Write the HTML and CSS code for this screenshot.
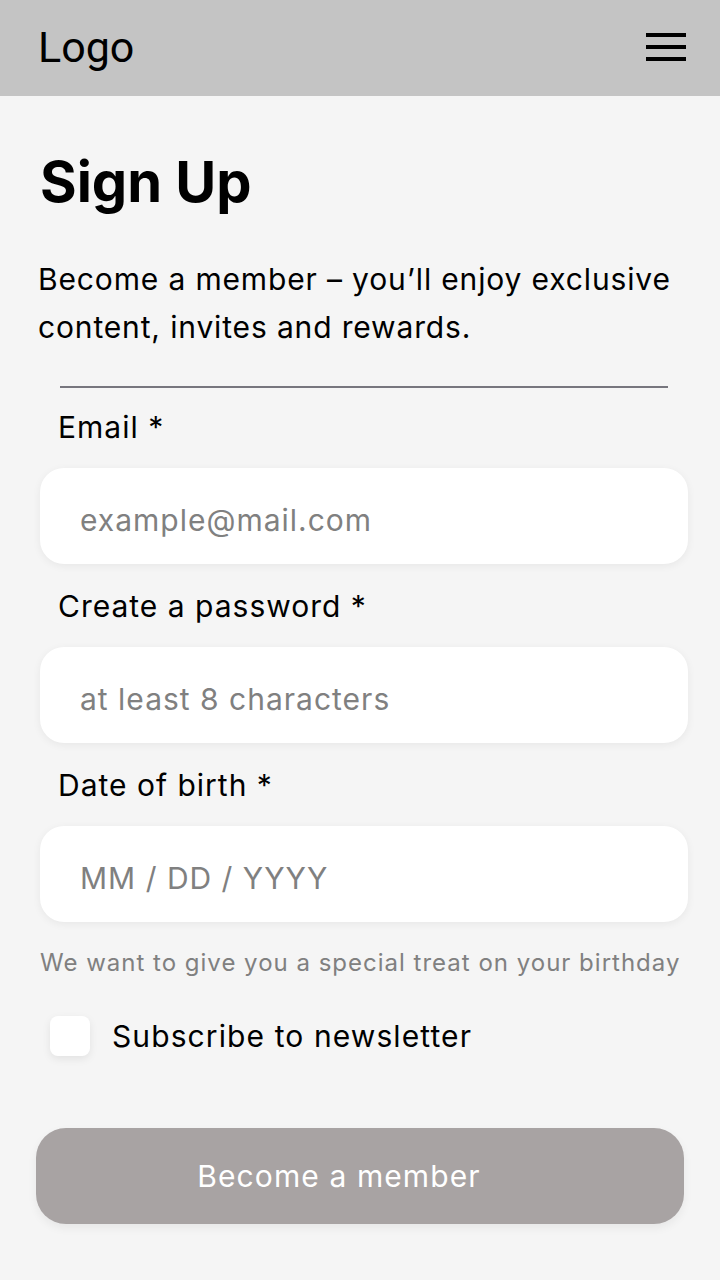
FILE: index.html
```html
<!DOCTYPE html>
<html lang="en">
<head>
<meta charset="utf-8">
<title>Sign Up</title>
<link rel="stylesheet" href="styles.css">
</head>
<body>
<header class="topbar">
  <span class="logo">Logo</span>
  <button class="menu" aria-label="Menu">
    <span class="bar"></span><span class="bar"></span><span class="bar"></span>
  </button>
</header>
<main class="page">
  <h1 class="title">Sign Up</h1>
  <p class="intro">Become a member – you’ll enjoy exclusive content, invites and rewards.</p>
  <hr class="divider">
  <form class="form">
    <label class="label" for="email">Email *</label>
    <input class="field" id="email" type="text" placeholder="example@mail.com">
    <label class="label" for="pw">Create a password *</label>
    <input class="field" id="pw" type="text" placeholder="at least 8 characters">
    <label class="label" for="dob">Date of birth *</label>
    <input class="field" id="dob" type="text" placeholder="MM / DD / YYYY">
    <p class="hint">We want to give you a special treat on your birthday</p>
    <label class="check">
      <span class="box"></span>
      <span class="check-text">Subscribe to newsletter</span>
    </label>
    <button type="button" class="submit">Become a member</button>
  </form>
</main>
</body>
</html>
```

FILE: styles.css
```css
* { box-sizing: border-box; }
html, body { margin: 0; padding: 0; }
body {
  background: #f5f5f5;
  font-family: Inter, "Noto Sans", sans-serif;
  color: #000;
  width: 720px;
  min-height: 1280px;
}
.topbar {
  height: 96px;
  background: #c4c4c4;
  display: flex;
  align-items: center;
  justify-content: space-between;
  padding: 0 34px 0 38px;
}
.logo {
  font-family: Roboto, sans-serif;
  font-size: 43px;
  line-height: 1;
  margin-top: -2px;
}
.menu {
  border: 0;
  background: none;
  padding: 0;
  display: flex;
  flex-direction: column;
  gap: 8px;
  margin-top: -2px;
}
.bar { display: block; width: 40px; height: 4px; background: #000; }
.page { padding: 0 32px 0 40px; }
.title {
  margin: 0;
  padding-top: 51px;
  font-size: 56px;
  font-weight: 700;
  line-height: 70px;
}
.intro {
  margin: 38px -20px 0 -2px;
  font-size: 30px;
  line-height: 48px;
  letter-spacing: 0.85px;
}
.divider {
  border: 0;
  height: 2px;
  background: #77767e;
  margin: 35px 20px 0 20px;
}
.form { display: flex; flex-direction: column; }
.label {
  font-size: 30px;
  line-height: 40px;
  letter-spacing: 1px;
  margin: 19px 0 21px 18px;
}
.field + .label { margin-top: 22px; }
.field {
  height: 96px;
  width: 648px;
  border: 0;
  border-radius: 24px;
  background: #fff;
  box-shadow: 0 2px 8px rgba(0,0,0,0.06);
  padding: 8px 40px 0 40px;
  font-family: Inter, sans-serif;
  font-size: 30px;
  letter-spacing: 1px;
  color: #000;
  outline: none;
}
.field::placeholder { color: #808080; }
.hint {
  margin: 25px -20px 0 0;
  font-size: 24px;
  line-height: 32px;
  letter-spacing: 1px;
  color: #808080;
}
.check {
  display: flex;
  align-items: center;
  gap: 22px;
  margin: 37px 0 0 10px;
}
.box {
  width: 40px;
  height: 40px;
  border-radius: 8px;
  background: #fff;
  box-shadow: 0 3px 8px rgba(0,0,0,0.08);
}
.check-text { font-size: 30px; line-height: 40px; letter-spacing: 1.1px; }
.submit {
  margin: 72px 0 0 -4px;
  width: 648px;
  height: 96px;
  border: 0;
  border-radius: 30px;
  background: #a8a3a3;
  color: #fff;
  font-family: Inter, sans-serif;
  font-size: 30px;
  letter-spacing: 1.1px;
  box-shadow: 0 4px 10px rgba(0,0,0,0.06);
  padding: 0 42px 0 0;
}
```
